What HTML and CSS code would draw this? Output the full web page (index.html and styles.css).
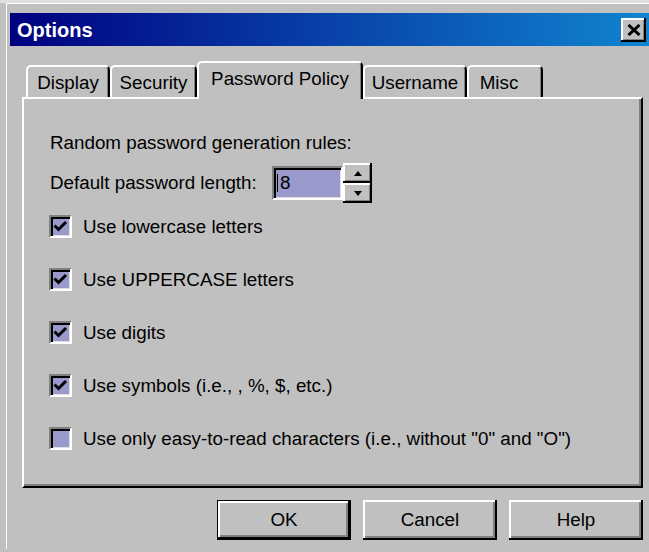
FILE: index.html
```html
<!DOCTYPE html>
<html lang="en">
<head>
<meta charset="utf-8">
<title>Options</title>
<link rel="stylesheet" href="styles.css">
</head>
<body>
<div class="screen">
  <div class="window">
    <div class="titlebar">
      <span class="title">Options</span>
      <button class="close" aria-label="Close">
        <svg width="14" height="12" viewBox="0 0 14 12"><path d="M1.5 1 L12.5 11 M12.5 1 L1.5 11" stroke="#000" stroke-width="3" fill="none"/></svg>
      </button>
    </div>
    <div class="body">
      <div class="tabs">
        <div class="tab tab-display">Display</div>
        <div class="tab tab-security">Security</div>
        <div class="tab tab-policy active">Password Policy</div>
        <div class="tab tab-username">Username</div>
        <div class="tab tab-misc">Misc</div>
      </div>
      <div class="panel">
        <div class="heading">Random password generation rules:</div>
        <div class="length-row">
          <span class="length-label">Default password length:</span>
          <div class="edit"><span class="caret"></span>8</div>
          <div class="spinner">
            <div class="spin-btn">
              <svg width="8" height="5" viewBox="0 0 8 5"><path d="M4 0 L8 5 L0 5 Z" fill="#000"/></svg>
            </div>
            <div class="spin-btn">
              <svg width="8" height="5" viewBox="0 0 8 5"><path d="M0 0 L8 0 L4 5 Z" fill="#000"/></svg>
            </div>
          </div>
        </div>
        <div class="options">
          <label class="option"><span class="box checked"><svg width="19" height="19" viewBox="0 0 19 19"><path d="M3.5 8.5 L7.5 12.5 L15 5" stroke="#000" stroke-width="3" fill="none"/></svg></span>Use lowercase letters</label>
          <label class="option"><span class="box checked"><svg width="19" height="19" viewBox="0 0 19 19"><path d="M3.5 8.5 L7.5 12.5 L15 5" stroke="#000" stroke-width="3" fill="none"/></svg></span>Use UPPERCASE letters</label>
          <label class="option"><span class="box checked"><svg width="19" height="19" viewBox="0 0 19 19"><path d="M3.5 8.5 L7.5 12.5 L15 5" stroke="#000" stroke-width="3" fill="none"/></svg></span>Use digits</label>
          <label class="option"><span class="box checked"><svg width="19" height="19" viewBox="0 0 19 19"><path d="M3.5 8.5 L7.5 12.5 L15 5" stroke="#000" stroke-width="3" fill="none"/></svg></span>Use symbols (i.e., , %, $, etc.)</label>
          <label class="option"><span class="box"></span>Use only easy-to-read characters (i.e., without "0" and "O")</label>
        </div>
      </div>
      <div class="buttons">
        <button class="btn default">OK</button>
        <button class="btn">Cancel</button>
        <button class="btn">Help</button>
      </div>
    </div>
  </div>
</div>
</body>
</html>
```

FILE: styles.css
```css
html, body {
  margin: 0;
  height: 100%;
  overflow: hidden;
}

body {
  background: #c0c0c0;
  font-family: "Liberation Sans", Arial, sans-serif;
  font-size: 18.8px;
  line-height: 22px;
  color: #000;
}

/* outer frame of the dialog */
.screen {
  border-top: 3px solid #dfdfdf;
  padding-left: 6px;
  height: 549px;
  box-sizing: border-box;
}

.window {
  border-top: 1px solid #fff;
  border-left: 1px solid #fff;
  padding: 9px 0 0 3px;
  height: 100%;
  box-sizing: border-box;
}

/* caption bar */
.titlebar {
  height: 33px;
  display: flex;
  align-items: center;
  justify-content: space-between;
  padding: 0 3px 0 7px;
  background: linear-gradient(to right, #000080, #1084d0);
}

.title {
  color: #fff;
  font-weight: bold;
  font-size: 20px;
}

.close {
  width: 25px;
  height: 24px;
  padding: 0;
  margin: 0;
  display: flex;
  align-items: center;
  justify-content: center;
  background: #c0c0c0;
  border: 0;
  box-shadow: inset -2px -2px #000, inset 2px 2px #fff, inset -3px -3px #808080;
}

/* dialog body */
.body {
  padding: 15px 6px 0 12px;
}

.tabs {
  display: flex;
  align-items: flex-end;
  height: 36px;
  padding-left: 4px;
}

.tab {
  box-sizing: border-box;
  height: 32px;
  padding-top: 5px;
  text-align: center;
  white-space: nowrap;
  border-left: 2px solid #fff;
  border-top: 2px solid #fff;
  border-right: 2px solid #000;
  border-radius: 5px 5px 0 0;
  box-shadow: inset -1px 0 #808080;
  background: #c0c0c0;
}

.tab.active {
  position: relative;
  z-index: 1;
  height: 38px;
  margin-bottom: -2px;
}

.tab-display { width: 84px; }
.tab-security { width: 87px; }
.tab-policy { width: 166px; }
.tab-username { width: 104px; }
.tab-misc { width: 76px; padding-right: 12px; }

/* property page */
.panel {
  border: 2px solid;
  border-color: #fff #000 #000 #fff;
  box-shadow: inset -2px -2px #808080;
  padding: 33px 0 36px 26px;
}

.heading {
  height: 22px;
}

.length-row {
  display: flex;
  align-items: center;
  height: 40px;
  margin-top: 9px;
}

.length-label {
  width: 222px;
}

.edit {
  box-sizing: border-box;
  width: 71px;
  height: 34px;
  display: flex;
  align-items: center;
  padding-left: 3px;
  background: #9999cc;
  border: 2px solid;
  border-color: #808080 #fff #fff #808080;
  box-shadow: inset 2px 2px #000, inset -1px -1px #dfdfdf;
}

.caret {
  width: 1px;
  height: 18px;
  background: #000;
  margin-right: 2px;
}

.spinner {
  display: flex;
  flex-direction: column;
  width: 29px;
  height: 40px;
}

.spin-btn {
  flex: 1;
  display: flex;
  align-items: center;
  justify-content: center;
  background: #c0c0c0;
  box-shadow: inset -2px -2px #000, inset 2px 2px #fff, inset -3px -3px #808080;
}

.options {
  display: flex;
  flex-direction: column;
  gap: 30px;
  margin-top: 12px;
}

.option {
  display: flex;
  align-items: center;
  gap: 11px;
  height: 23px;
  margin-left: -1px;
}

.box {
  box-sizing: border-box;
  width: 23px;
  height: 23px;
  display: flex;
  align-items: center;
  justify-content: center;
  background: #9999cc;
  border: 2px solid;
  border-color: #808080 #fff #fff #808080;
  box-shadow: inset 2px 2px #000, inset -1px -1px #dfdfdf;
}

/* command buttons */
.buttons {
  display: flex;
  justify-content: flex-end;
  gap: 12px;
  margin-top: 12px;
}

.btn {
  width: 134px;
  height: 40px;
  padding: 0;
  margin: 0;
  font: inherit;
  color: #000;
  background: #c0c0c0;
  border: 0;
  box-shadow: inset -2px -2px #000, inset 2px 2px #fff, inset -4px -4px #808080;
}

.btn.default {
  box-shadow: inset 0 0 0 1px #000, inset -3px -3px #000, inset 3px 3px #fff, inset -5px -5px #808080;
}
```
